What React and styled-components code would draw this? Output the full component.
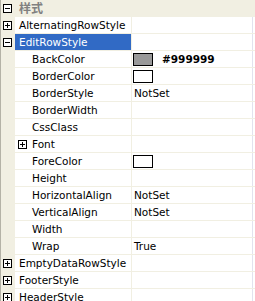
import React from "react";
import styled, { createGlobalStyle } from "styled-components";

const GlobalStyle = createGlobalStyle`
  html, body {
    margin: 0;
    padding: 0;
    background: #ffffff;
  }
`;

const LINE = "#f1efe2";

const Grid = styled.div`
  width: 255px;
  height: 301px;
  overflow: hidden;
  box-sizing: border-box;
  border-left: 1px solid #b4b2a6;
  background: #ffffff;
  font-family: "DejaVu Sans", Tahoma, sans-serif;
  font-size: 10.5px;
  color: #000000;
`;

const CategoryRow = styled.div`
  display: flex;
  align-items: center;
  height: 16px;
  border-bottom: 1px solid ${LINE};
  background: ${LINE};
`;

const CategoryLabel = styled.span`
  margin-left: 4px;
  font-family: "Noto Sans CJK SC", sans-serif;
  font-weight: bold;
  font-size: 12px;
  color: #808080;
  line-height: 16px;
`;

const Row = styled.div`
  display: grid;
  grid-template-columns: 14px 116px 1fr;
  height: 16px;
  border-bottom: 1px solid ${LINE};
  padding-right: 2px;
`;

const Gutter = styled.div`
  display: flex;
  align-items: center;
  width: 14px;
  height: 100%;
  flex: none;
  background: ${LINE};
`;

const NameCell = styled.div`
  display: flex;
  align-items: center;
  padding-left: ${(p) => (p.$level ? 1 : 4)}px;
  background: ${(p) => (p.$selected ? "#316ac5" : "transparent")};
  color: ${(p) => (p.$selected ? "#ffffff" : "#000000")};
  white-space: nowrap;
  overflow: hidden;
  line-height: 16px;
`;

const Indent = styled.span`
  display: inline-flex;
  align-items: center;
  width: ${(p) => p.$width}px;
  flex: none;
`;

const ValueCell = styled.div`
  display: flex;
  align-items: center;
  border-left: 1px solid ${LINE};
  border-right: 1px solid #e2e2ee;
  padding-left: 1px;
  white-space: nowrap;
  overflow: hidden;
  line-height: 16px;
`;

const ValueText = styled.span`
  padding-left: 1px;
  font-weight: ${(p) => (p.$bold ? "bold" : "normal")};
`;

const Swatch = styled.span`
  display: inline-block;
  box-sizing: border-box;
  width: 20px;
  height: 13px;
  border: 1px solid #000000;
  background: ${(p) => p.$color};
  margin-right: 8px;
  flex: none;
`;

const Box = styled.span`
  position: relative;
  display: inline-block;
  box-sizing: border-box;
  width: 9px;
  height: 9px;
  margin-left: 2px;
  border: 1px solid #000000;
  background: #ffffff;
  flex: none;

  &::before {
    content: "";
    position: absolute;
    left: 1px;
    top: 3px;
    width: 5px;
    height: 1px;
    background: #000000;
  }

  &::after {
    content: "";
    display: ${(p) => (p.$open ? "none" : "block")};
    position: absolute;
    left: 3px;
    top: 1px;
    width: 1px;
    height: 5px;
    background: #000000;
  }
`;

const rows = [
  { name: "AlternatingRowStyle", level: 0, expand: "closed" },
  { name: "EditRowStyle", level: 0, expand: "open", selected: true },
  { name: "BackColor", level: 1, swatch: "#999999", value: "#999999", bold: true },
  { name: "BorderColor", level: 1, swatch: "#ffffff" },
  { name: "BorderStyle", level: 1, value: "NotSet" },
  { name: "BorderWidth", level: 1 },
  { name: "CssClass", level: 1 },
  { name: "Font", level: 1, expand: "closed" },
  { name: "ForeColor", level: 1, swatch: "#ffffff" },
  { name: "Height", level: 1 },
  { name: "HorizontalAlign", level: 1, value: "NotSet" },
  { name: "VerticalAlign", level: 1, value: "NotSet" },
  { name: "Width", level: 1 },
  { name: "Wrap", level: 1, value: "True" },
  { name: "EmptyDataRowStyle", level: 0, expand: "closed" },
  { name: "FooterStyle", level: 0, expand: "closed" },
  { name: "HeaderStyle", level: 0, expand: "closed" },
];

const PropertyRow = ({ row }) => (
  <Row>
    <Gutter>
      {row.level === 0 && row.expand && <Box $open={row.expand === "open"} />}
    </Gutter>
    <NameCell $level={row.level} $selected={row.selected}>
      {row.level === 1 && (
        <Indent $width={16}>
          {row.expand && <Box $open={row.expand === "open"} />}
        </Indent>
      )}
      {row.name}
    </NameCell>
    <ValueCell>
      {row.swatch && <Swatch $color={row.swatch} />}
      {row.value && <ValueText $bold={row.bold}>{row.value}</ValueText>}
    </ValueCell>
  </Row>
);

export default function App() {
  return (
    <>
      <GlobalStyle />
      <Grid>
        <CategoryRow>
          <Gutter>
            <Box $open />
          </Gutter>
          <CategoryLabel>样式</CategoryLabel>
        </CategoryRow>
        {rows.map((row) => (
          <PropertyRow key={row.name} row={row} />
        ))}
      </Grid>
    </>
  );
}
